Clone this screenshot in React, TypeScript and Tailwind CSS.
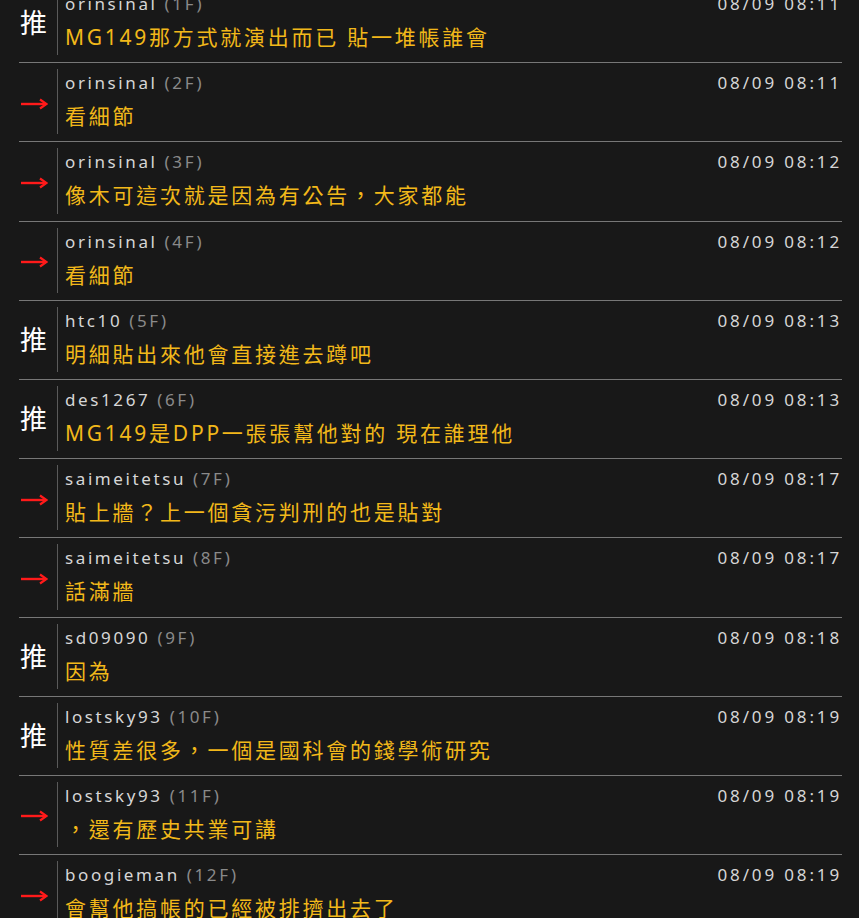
import React from 'react';

type Push = {
  tag: 'push' | 'arrow';
  user: string;
  floor: number;
  time: string;
  text: string;
};

const pushes: Push[] = [
  { tag: 'push', user: 'orinsinal', floor: 1, time: '08/09 08:11', text: 'MG149那方式就演出而已 貼一堆帳誰會' },
  { tag: 'arrow', user: 'orinsinal', floor: 2, time: '08/09 08:11', text: '看細節' },
  { tag: 'arrow', user: 'orinsinal', floor: 3, time: '08/09 08:12', text: '像木可這次就是因為有公告，大家都能' },
  { tag: 'arrow', user: 'orinsinal', floor: 4, time: '08/09 08:12', text: '看細節' },
  { tag: 'push', user: 'htc10', floor: 5, time: '08/09 08:13', text: '明細貼出來他會直接進去蹲吧' },
  { tag: 'push', user: 'des1267', floor: 6, time: '08/09 08:13', text: 'MG149是DPP一張張幫他對的 現在誰理他' },
  { tag: 'arrow', user: 'saimeitetsu', floor: 7, time: '08/09 08:17', text: '貼上牆？上一個貪污判刑的也是貼對' },
  { tag: 'arrow', user: 'saimeitetsu', floor: 8, time: '08/09 08:17', text: '話滿牆' },
  { tag: 'push', user: 'sd09090', floor: 9, time: '08/09 08:18', text: '因為' },
  { tag: 'push', user: 'lostsky93', floor: 10, time: '08/09 08:19', text: '性質差很多，一個是國科會的錢學術研究' },
  { tag: 'arrow', user: 'lostsky93', floor: 11, time: '08/09 08:19', text: '，還有歷史共業可講' },
  { tag: 'arrow', user: 'boogieman', floor: 12, time: '08/09 08:19', text: '會幫他搞帳的已經被排擠出去了' }
];

const Arrow = () => (
  <svg width="27" height="12" viewBox="0 0 27 12" className="mt-[4px]">
    <path d="M0 6 H25" stroke="#ff1a1a" strokeWidth="2.4" />
    <path d="M19 1.5 L25.5 6 L19 10.5" stroke="#ff1a1a" strokeWidth="2.2" fill="none" />
  </svg>
);

const PushRow = ({ item }: { item: Push }) => (
  <div className="flex items-center border-b border-[#777777] pt-[6px] pb-[7px]">
    <div className="flex w-[38px] shrink-0 items-center">
      {item.tag === 'push' ? (
        <span className="pl-[1px] text-[27px] leading-none text-white">推</span>
      ) : (
        <span className="pl-[2px]">
          <Arrow />
        </span>
      )}
    </div>
    <div className="h-[65.2px] flex-1 border-l border-[#5a5a5a] pl-[7px]">
      <div className="flex h-[28px] items-center justify-between text-[17px] leading-[28px]">
        <span className="tracking-[2.6px] text-[#d6d6d6]">
          {item.user} <span className="text-[#8a8a8a]">({item.floor}F)</span>
        </span>
        <span className="tracking-[2.85px] text-[#d6d6d6]">{item.time}</span>
      </div>
      <div className="whitespace-nowrap text-[21px] leading-[38px] tracking-[2.75px] text-[#f2b81a]">{item.text}</div>
    </div>
  </div>
);

export default function App() {
  return (
    <div
      className="h-[918px] w-full overflow-hidden bg-[#181818]"
      style={{ fontFamily: '"Noto Sans", "Noto Sans CJK TC", sans-serif' }}
    >
      <div className="-mt-[16px] ml-[19px] w-[823px]">
        {pushes.map(p => (
          <PushRow key={p.floor} item={p} />
        ))}
      </div>
    </div>
  );
}
